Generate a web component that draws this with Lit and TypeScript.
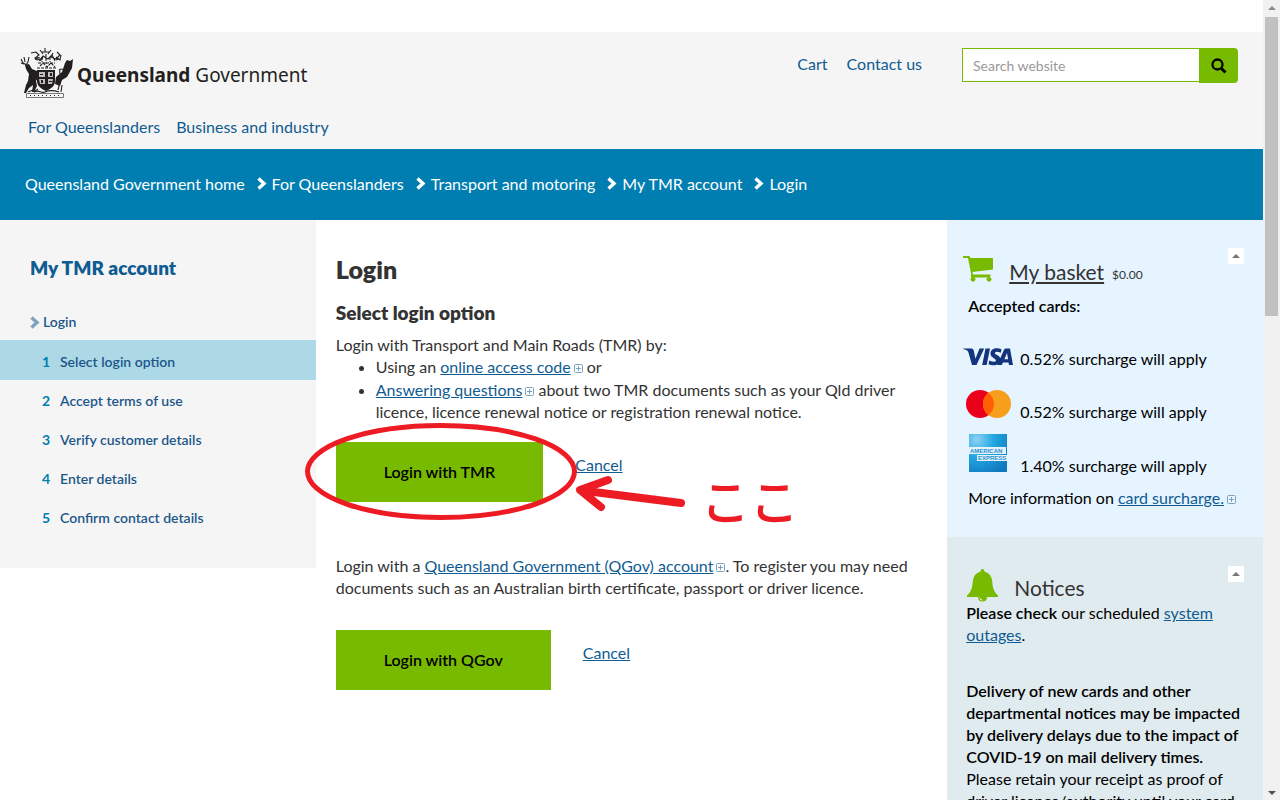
import { LitElement, html, css } from "lit";
import { customElement } from "lit/decorators.js";
import { classMap } from "lit/directives/class-map.js";

const crest = html`<svg class="crest" width="54" height="50" viewBox="0 0 54 50" fill="#231f20" aria-hidden="true">
  <g fill="none" stroke="#231f20" stroke-width="1.1">
    <path d="M11 5l5-1 3 3-4 3 6 2 2-3M33 5l-2 4 5 2 4-4-3-3M20 2l3 4M31 2l-3 4M25 0v4M22 4h8M19 13l4-5 5 3 4-4 3 6M16 9l4 1M36 9l4 3 1-5" />
    <path d="M18 15h17M20 18l3-3 4 4 4-4 4 4M18 12l-4-1M36 12l3-1M22 9v5M30 9v5M26 6v10M17 20h19" stroke-dasharray="3 1" />
    <path d="M1 11l2 4 4 2M4 9l1 5M9 9l-1 5-2 3M1 15l3 1" />
    <path d="M40 22c-2 4 3 6 1 10M39 22c3-2 4-1 5 2M36 30l4 4-2 8M42 37l-1 7M18 41l-4 3M8 44l5-2" />
    <path d="M6.500 45.500h37v4h-37z" stroke-width="1" stroke="#777" />
    <path d="M10 47.500h30" stroke-dasharray="1 3" />
    <path d="M14 44c5-3 7 2 11 0s8-2 14 0" />
  </g>
  <path d="M5 17l4-1 3 5 5 2 2 5-3 5 1 5-3 6h-2l1-7-4 3-3 5H4l2-8 2-4 1-7-3-5z" />
  <path d="M53 11l-1 9-5 9-5 3-2 6-5-2 1-7 6-5 3-9 2-3 3 1z" />
  <path d="M17 22h18v12q-1 6-9 9-8-3-9-9z" />
  <g fill="#f5f5f5">
    <path d="M19 24h6v5h-6zM28 24h5v5h-5zM19 31h6v5h-5zM28 31h5l-1 5h-4z" opacity=".75" />
  </g>
  <path d="M20 26h3v1h-3zM30 25h2v3h-2zM21 32h2v3h-2zM29 33h3v1h-3z" />
</svg>`;

const chevron = html`<svg class="chevron" width="10" height="13" viewBox="0 0 10 13" aria-hidden="true">
  <path d="M1.500 1.500 7 6.500 1.500 11.500" fill="none" stroke="currentColor" stroke-width="3.400" />
</svg>`;

const expand = html`<svg class="expand" width="9" height="9" viewBox="0 0 9 9" fill="none" stroke="#7ba3c0" aria-hidden="true">
  <rect x=".5" y=".5" width="8" height="8" rx="1" /><path d="M2 4.500h5M4.500 2v5" />
</svg>`;

const cart = html`<svg width="30" height="26" viewBox="0 0 30 26" fill="#78ba00" aria-hidden="true">
  <path d="M0 0h6q1 0 1.300 2H30v11.500L9.500 16l.5 2.500h17.500V20H8.500L5 2H0z" />
  <circle cx="10" cy="23.300" r="2.400" /><circle cx="26" cy="23.300" r="2.400" /><path d="M8 19h19v2.500H8z" />
</svg>`;

const bell = html`<svg width="31" height="33" viewBox="0 0 31 33" fill="#78ba00" aria-hidden="true">
  <path d="M15.500 0q2 0 2 2.400Q25 4.500 25.300 13 25.500 22 31 26.500V28H0v-1.500Q5.500 22 5.700 13 6 4.500 13.500 2.400q0-2.400 2-2.400z" />
  <path d="M11 28h9q0 4.500-4.500 4.500T11 28z" /><path d="M12.500 28.500q.5 2.600 3 2.600" fill="none" stroke="#e2ecf0" />
</svg>`;

const visa = html`<svg class="visa" width="50" height="18" viewBox="0 0 50 18" fill="#14347c" role="img" aria-label="Visa">
  <path d="M0 0.500h8.500q1.700 0 2.200 1.700l1.700 8.500L16.500.500h4.700L13.500 17H9L5.300 4Q4.500 2 0 1zM22.500.500H27L23.700 17h-4.500zM38.500 1.200l-.7 3.500q-5-2-6 .2c0 2 5.700 2 5.700 6.600 0 6-7.500 6.700-12 4.800l.8-3.700q6 2.400 6.700 0C33.200 10.500 27.400 9.600 27.500 5.600 27.600.500 33.500-.900 38.500 1.200zM43 .500h4L50 17h-4l-.5-2.500h-5.600l-1 2.500h-4.600L41 1.800Q41.600.500 43 .500zm1 4.500l-2.600 6.200h3.700z" />
</svg>`;

const mastercard = html`<svg class="mc" width="46" height="28" viewBox="0 0 46 28" role="img" aria-label="Mastercard">
  <circle cx="14" cy="14" r="14" fill="#eb001b" /><circle cx="31" cy="14" r="14" fill="#f79e1b" />
  <path d="M22.500 2.900a14 14 0 0 1 0 22.200a14 14 0 0 1 0-22.200z" fill="#ff5f00" />
</svg>`;

const amex = html`<svg class="amex" width="38" height="38" viewBox="0 0 38 38" role="img" aria-label="American Express">
  <defs><radialGradient id="amex-sheen" cx=".2" cy=".15" r="1">
    <stop offset="0" stop-color="#8ed2f4" /><stop offset=".45" stop-color="#22a7e0" /><stop offset="1" stop-color="#1278be" />
  </radialGradient></defs>
  <path d="M0 0h38v38H0z" fill="url(#amex-sheen)" />
  <path d="M0 13h37v7H0zM8 21h30v6H8z" fill="#e4f3fc" />
  <g fill="#2a8fcd" font-family="Liberation Sans, sans-serif" font-weight="700" font-size="6">
    <text x="1" y="18.700">AMERICAN</text><text x="9" y="26.200">EXPRESS</text>
  </g>
</svg>`;

@customElement("app-root")
export class AppRoot extends LitElement {
  static styles = css`
    :host {
      display: block;
      font: 400 16px/22px Lato, sans-serif;
      color: #333;
    }
    * { box-sizing: border-box; }
    a { color: #0f5b92; }
    b { font-weight: 600; }
    h1, h2, p, ul, ol { margin: 0; padding: 0; }
    svg { display: block; flex: none; }
    .window { display: flex; height: 100vh; overflow: hidden; background: #fff; }
    .page { flex: 1; min-width: 0; padding-top: 32px; }

    .header { background: #f5f5f5; padding: 16px 25px 11px 20px; }
    .top { display: flex; align-items: flex-start; height: 50px; }
    .brand { display: flex; gap: 3px; color: #231f20; text-decoration: none; margin-right: auto; }
    .wordmark { font: 400 19px/24px "Noto Sans", sans-serif; padding-top: 15px; white-space: nowrap; }
    .wordmark strong { font-weight: 700; }
    .header a:not(.brand), .crumbs a { text-decoration: none; }
    .tools { display: flex; gap: 19px; padding: 5px 40px 0 0; }
    .search { display: flex; align-items: flex-start; }
    .search input {
      width: 237px; height: 34px; padding: 0 10px; border: 1px solid #78ba00; border-right: 0;
      border-radius: 0; background: #fff; font: 400 14px/20px Lato, sans-serif; outline: 0;
    }
    .search input::placeholder { color: #999; opacity: 1; }
    .search button {
      display: grid; place-items: center; width: 39px; height: 35px; padding: 0;
      border: 0; border-radius: 0 4px 4px 0; background: #78ba00;
    }
    .sections { display: flex; gap: 16px; padding: 18px 8px 0; }

    .crumbs { display: flex; align-items: center; gap: 12px; height: 71px; padding: 0 25px 2px; background: #007eb1; color: #fff; }
    .crumbs a { color: #fff; }
    .crumb { display: flex; align-items: center; gap: 5px; }

    .columns { display: grid; grid-template-columns: 1fr 2fr 1fr; align-items: start; }

    .sidebar { background: #f5f5f5; padding: 36px 0 32px; }
    .sidebar a { text-decoration: none; }
    .account { font-size: 19px; line-height: 24px; font-weight: 800; padding-left: 30px; }
    .current {
      display: flex; align-items: center; gap: 3px; padding: 32px 0 8px 30px;
      font-size: 14px; line-height: 20px; font-weight: 600; color: #7ba3c0;
    }
    .current a, .step a { color: #1c578a; }
    .steps { list-style: none; }
    .step {
      display: flex; gap: 10px; padding: 11px 0 8px 42px;
      font-size: 14px; line-height: 20px; font-weight: 600;
    }
    .step.active { background: #add8e6; padding-top: 12px; }
    .num { width: 8px; color: #007eb1; font-weight: 700; }

    .main { padding: 33px 20px 0; }
    h1 { font-size: 25px; line-height: 32px; font-weight: 800; }
    .main h2 { font-size: 19px; line-height: 28px; margin: 14px 0 7px; font-weight: 800; }
    .main ul { padding: 0 0 0 40px; margin-bottom: 19px; }
    .main li + li { margin-top: 1px; }
    .expand { display: inline-block; margin-left: 3px; }
    .action { position: relative; display: flex; gap: 32px; align-items: flex-start; }
    .action button {
      height: 60px; padding: 0 48px; border: 0; background: #78ba00; color: #000;
      font: 600 16px/22px Lato, sans-serif;
    }
    .action a { margin-top: 12px; }
    .qgov { margin: 53px 0 31px; }
    .markup { position: absolute; left: 0; top: 0; overflow: visible; pointer-events: none; }
    .here {
      position: absolute; left: 365px; top: 22px; color: #ed1c24; pointer-events: none;
      font: 500 49px/70px "Noto Sans CJK JP", sans-serif;
    }

    .panel { color: #000; padding: 28px 19px 0 16px; }
    .basket { background: #e5f4ff; padding-bottom: 28px; }
    .notices { background: #e0ebef; padding-top: 29px; }
    .panel-head { display: flex; align-items: flex-start; color: #333; }
    .panel-head h2 { font-size: 21px; line-height: 28px; font-weight: 400; margin-left: 16px; }
    .panel-head h2 a { color: #333; }
    .cart { padding-top: 8px; }
    .basket h2 { padding-top: 10px; }
    .total { font-size: 12px; line-height: 16px; padding: 19px 0 0 8px; }
    .bell { padding: 3px 0 0 4px; }
    .notices h2 { padding-top: 8px; }
    .toggle { width: 16px; height: 16px; padding: 0; margin-left: auto; border: 0; background: #fff; display: grid; place-items: center; }
    .accepted, .more { padding-left: 5px; }
    .accepted { padding-top: 9px; }
    .cards { list-style: none; padding: 31px 0 10px; }
    .cards li { display: grid; grid-template-columns: 57px 1fr; align-items: end; }
    .cards li + li { padding-top: 20px; }
    .cards li.last { padding-top: 11px; }
    .visa { margin-bottom: 4px; }
    .mc { margin: 0 0 5px 3px; }
    .amex { margin: 0 0 5px 6px; }
    .notice { padding-left: 3px; }
    .notice + .notice { padding-top: 34px; }

    .scrollbar {
      flex: none; width: 17px; background: #f1f1f1;
      display: flex; flex-direction: column; align-items: center; justify-content: space-between; padding-bottom: 5px;
    }
    .rail { display: flex; flex-direction: column; align-items: center; gap: 7px; padding-top: 6px; }
    .thumb { width: 13px; height: calc(37vh + 3px); background: #c1c1c1; }
  `;

  private crumbs = ["For Queenslanders", "Transport and motoring", "My TMR account", "Login"];
  private steps = ["Select login option", "Accept terms of use", "Verify customer details", "Enter details", "Confirm contact details"];

  private toggle(label: string) {
    return html`<button class="toggle" aria-label=${label}>
      <svg width="8" height="4" viewBox="0 0 8 4" fill="#777"><path d="M0 4 4 0l4 4z" /></svg>
    </button>`;
  }

  render() {
    return html`<div class="window">
      <div class="page">
        <header class="header">
          <div class="top">
            <a class="brand" href="#">${crest}<span class="wordmark"><strong>Queensland</strong> Government</span></a>
            <nav class="tools"><a href="#">Cart</a><a href="#">Contact us</a></nav>
            <form class="search" role="search" @submit=${(e: Event) => e.preventDefault()}>
              <input type="text" placeholder="Search website" aria-label="Search website" />
              <button aria-label="Search">
                <svg width="16" height="16" viewBox="0 0 16 16" fill="none" stroke="#000">
                  <circle cx="6.500" cy="6.500" r="5" stroke-width="2.300" /><path d="M10.200 10.200l4.300 4.300" stroke-width="3" />
                </svg>
              </button>
            </form>
          </div>
          <nav class="sections"><a href="#">For Queenslanders</a><a href="#">Business and industry</a></nav>
        </header>
        <nav class="crumbs" aria-label="Breadcrumb">
          <a href="#">Queensland Government home</a>
          ${this.crumbs.map((c) => html`<span class="crumb">${chevron}<a href="#">${c}</a></span>`)}
        </nav>
        <div class="columns">
          <nav class="sidebar">
            <h2 class="account"><a href="#">My TMR account</a></h2>
            <div class="current">${chevron}<a href="#">Login</a></div>
            <ol class="steps">
              ${this.steps.map((s, i) => html`<li class=${classMap({ step: true, active: i === 0 })}>
                <span class="num">${i + 1}</span><a href="#">${s}</a></li>`)}
            </ol>
          </nav>
          <main class="main">
            <h1>Login</h1>
            <h2>Select login option</h2>
            <p>Login with Transport and Main Roads (TMR) by:</p>
            <ul>
              <li>Using an <a href="#">online access code</a>${expand} or</li>
              <li><a href="#">Answering questions</a>${expand} about two TMR documents such as your Qld driver licence, licence renewal notice or registration renewal notice.</li>
            </ul>
            <div class="action">
              <button>Login with TMR</button><a href="#">Cancel</a>
              <svg class="markup" width="360" height="80" viewBox="0 0 360 80" fill="none" stroke="#ed1c24" aria-hidden="true">
                <ellipse cx="105" cy="29.500" rx="133.500" ry="46" stroke-width="5" />
                <path d="M345 61 246 48.500M272 38 244 48 265 65" stroke-width="8" stroke-linecap="round" stroke-linejoin="round" />
              </svg>
              <span class="here" lang="ja">ここ</span>
            </div>
            <p class="qgov">Login with a <a href="#">Queensland Government (QGov) account</a>${expand}. To register you may need documents such as an Australian birth certificate, passport or driver licence.</p>
            <div class="action"><button>Login with QGov</button><a href="#">Cancel</a></div>
          </main>
          <aside>
            <section class="panel basket">
              <div class="panel-head">
                <span class="cart">${cart}</span>
                <h2><a href="#">My basket</a></h2>
                <span class="total">$0.00</span>
                ${this.toggle("Collapse basket")}
              </div>
              <p class="accepted"><b>Accepted cards:</b></p>
              <ul class="cards">
                <li>${visa}<span>0.52% surcharge will apply</span></li>
                <li>${mastercard}<span>0.52% surcharge will apply</span></li>
                <li class="last">${amex}<span>1.40% surcharge will apply</span></li>
              </ul>
              <p class="more">More information on <a href="#">card surcharge.</a>${expand}</p>
            </section>
            <section class="panel notices">
              <div class="panel-head">
                <span class="bell">${bell}</span>
                <h2>Notices</h2>
                ${this.toggle("Collapse notices")}
              </div>
              <p class="notice"><b>Please check</b> our scheduled <a href="#">system outages</a>.</p>
              <p class="notice"><b>Delivery of new cards and other departmental notices may be impacted by delivery delays due to the impact of COVID-19 on mail delivery times.</b><br />Please retain your receipt as proof of driver licence/authority until your card arrives.</p>
            </section>
          </aside>
        </div>
      </div>
      <div class="scrollbar" aria-hidden="true">
        <div class="rail">
          <svg width="8" height="4" viewBox="0 0 8 4" fill="#8a8a8a"><path d="M0 4 4 0l4 4z" /></svg>
          <div class="thumb"></div>
        </div>
        <svg width="8" height="4" viewBox="0 0 8 4" fill="#505050"><path d="M0 0h8L4 4z" /></svg>
      </div>
    </div>`;
  }
}
